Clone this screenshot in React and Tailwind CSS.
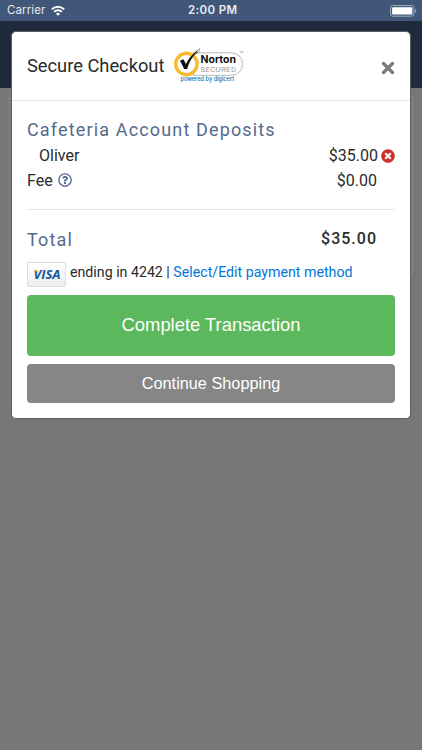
import { FaRegQuestionCircle, FaTimesCircle } from 'react-icons/fa';

function StatusBar() {
  return (
    <div className="relative flex h-[21px] items-center justify-between bg-[#40577a] pl-[7px] pr-1 font-['Inter',sans-serif] text-[#e8ebf0]">
      <div className="flex items-center gap-[6px]">
        <span className="mt-px text-[11.5px] tracking-[0.1px]">Carrier</span>
        <svg width="14" height="10" viewBox="0 0 14 10" fill="none" stroke="#fff" strokeWidth="1.9">
          <path d="M0.8 3.4a8.8 8.8 0 0 1 12.4 0" />
          <path d="M3.1 5.9a5.6 5.6 0 0 1 7.8 0" />
          <path d="M7 9.8L4.9 7.7a3 3 0 0 1 4.2 0z" fill="#fff" stroke="none" />
        </svg>
      </div>
      <span className="absolute left-[188px] mt-px text-[11.5px] font-semibold tracking-[0.35px]">2:00 PM</span>
      <svg className="mt-px" width="28" height="12" viewBox="0 0 28 12">
        <rect x="0.5" y="0.6" width="23.4" height="10.6" rx="2.4" fill="none" stroke="#a3afc1" strokeWidth="1" />
        <rect x="2.1" y="2.2" width="20.2" height="7.4" rx="1" fill="#fff" />
        <path d="M25.2 4v4c1.3-.5 1.3-3.5 0-4z" fill="#a3afc1" />
      </svg>
    </div>
  );
}

function NortonBadge() {
  return (
    <svg width="72" height="36" viewBox="0 0 72 36">
      <rect x="12" y="4.8" width="57.5" height="22.5" rx="11" fill="#fff" stroke="#b5b5b5" strokeWidth="1" />
      <circle cx="13.4" cy="16" r="10.7" fill="#fff" stroke="#fbb931" strokeWidth="3.4" />
      <path d="M7 12.8l3.4-1.6 2.6 4.700c2.500-5 5.300-8.700 9.300-11.700l2.500-2-1.300 2.200c-4.600 5-7.300 9.600-9.300 16.500h-3z" fill="#111" />
      <path d="M21 5.200l5.800-4.300M22.500 6.400l4-3.400" stroke="#4a3b20" strokeWidth="1" strokeDasharray="1.3 0.7" />
      <text x="27.5" y="15" fontSize="10.5" fontWeight="700" fill="#111" textLength="35.5" lengthAdjust="spacingAndGlyphs" fontFamily="Inter, sans-serif">Norton</text>
      <text x="27.5" y="23.8" fontSize="7.8" fill="#999" textLength="35.5" fontFamily="Roboto, sans-serif">SECURED</text>
      <text x="66.500" y="5" fontSize="2.5" fill="#777" fontFamily="Inter, sans-serif">TM</text>
      <text x="7.5" y="33" fontSize="6" fill="#1c7fc4" stroke="#1c7fc4" strokeWidth="0.15" textLength="53.500" lengthAdjust="spacingAndGlyphs" fontFamily="Inter, sans-serif">powered by digicert</text>
    </svg>
  );
}

function VisaCard() {
  return (
    <div className="h-[25px] w-[39px] shrink-0 rounded-[2px] border border-[#dcdcdc] bg-linear-to-b from-white to-[#ededed]">
      <svg width="37" height="23" viewBox="0 0 37 23">
        <text x="5.5" y="15.8" fontSize="12" fontWeight="700" fontStyle="italic" fill="#15589b" textLength="27" lengthAdjust="spacingAndGlyphs" fontFamily="Open Sans, sans-serif">VISA</text>
        <path d="M4.7 7h3.600c.8 0 1.100.3 1.300 1l.5 2.500c-1-1.700-2.800-2.900-5.400-3.500z" fill="#f0b323" />
      </svg>
    </div>
  );
}

export default function App() {
  return (
    <div className="relative h-[750px] w-[422px] overflow-hidden bg-[#777777] font-['Roboto',sans-serif] text-[#292b2c]">
      <StatusBar />
      <div className="h-[67px] bg-[#1f2b3d]" />
      <div className="mx-[6px] mt-[6px] h-[182px] rounded-[2px] border border-[#707070] bg-[#7c7c7c]" />

      <div className="absolute left-[11px] top-[31px] w-[400px] rounded-[5px] border border-[#5c5f63] bg-white">
        <div className="flex h-[69px] items-center border-b border-[#e5e5e5] px-[15px]">
          <h4 className="mt-[-1px] w-[137px] whitespace-nowrap text-[18.3px]">Secure Checkout</h4>
          <div className="ml-[9px] mt-[-1px]"><NortonBadge /></div>
          <svg className="ml-auto mt-[4px]" width="14" height="14" viewBox="0 0 14 14" stroke="#7c7c7c" strokeWidth="3.4" strokeLinecap="round">
            <path d="M2.5 2.5l9 9M11.5 2.5l-9 9" />
          </svg>
        </div>

        <div className="px-[15px] pb-[15px] pt-[16px]">
          <h5 className="h-[27px] text-[18px] leading-[25px] tracking-[1.15px] text-[#546a8c]">Cafeteria Account Deposits</h5>
          <div className="flex h-[24px] items-center text-[16px]">
            <span className="pl-3">Oliver</span>
            <span className="ml-auto">$35.00</span>
            <FaTimesCircle className="ml-[3px] mt-[-1px] text-[#c9302c]" size={14} />
          </div>
          <div className="flex h-[25px] items-center pr-[18px] text-[16px]">
            <span>Fee</span>
            <FaRegQuestionCircle className="ml-[5px] mt-[-1px] text-[#4a6390]" size={14} />
            <span className="ml-auto">$0.00</span>
          </div>
          <div className="mt-[16px] border-t border-[#e5e5e5]" />
          <div className="mt-[16px] flex h-[27px] items-center justify-between pr-[18px]">
            <span className="text-[18px] tracking-[1.2px] text-[#546a8c]">Total</span>
            <span className="mt-[-2px] text-[16px] font-medium tracking-[1px]">$35.00</span>
          </div>
          <div className="mt-[8px] flex h-[26px] items-center text-[14.2px]">
            <VisaCard />
            <span className="ml-1 mt-[-2px] whitespace-nowrap">
              ending in 4242 | <a className="text-[#0275d8]">Select/Edit payment method</a>
            </span>
          </div>
          <button className="mt-[8px] block h-[61px] w-full rounded-[4px] bg-[#5cb85c] pb-px font-['Liberation_Sans',sans-serif] text-[18.4px] text-white">
            Complete Transaction
          </button>
          <button className="mt-[8px] block h-[39px] w-full rounded-[4px] bg-[#868686] font-['Liberation_Sans',sans-serif] text-[16.3px] text-white">
            Continue Shopping
          </button>
        </div>
      </div>
    </div>
  );
}
